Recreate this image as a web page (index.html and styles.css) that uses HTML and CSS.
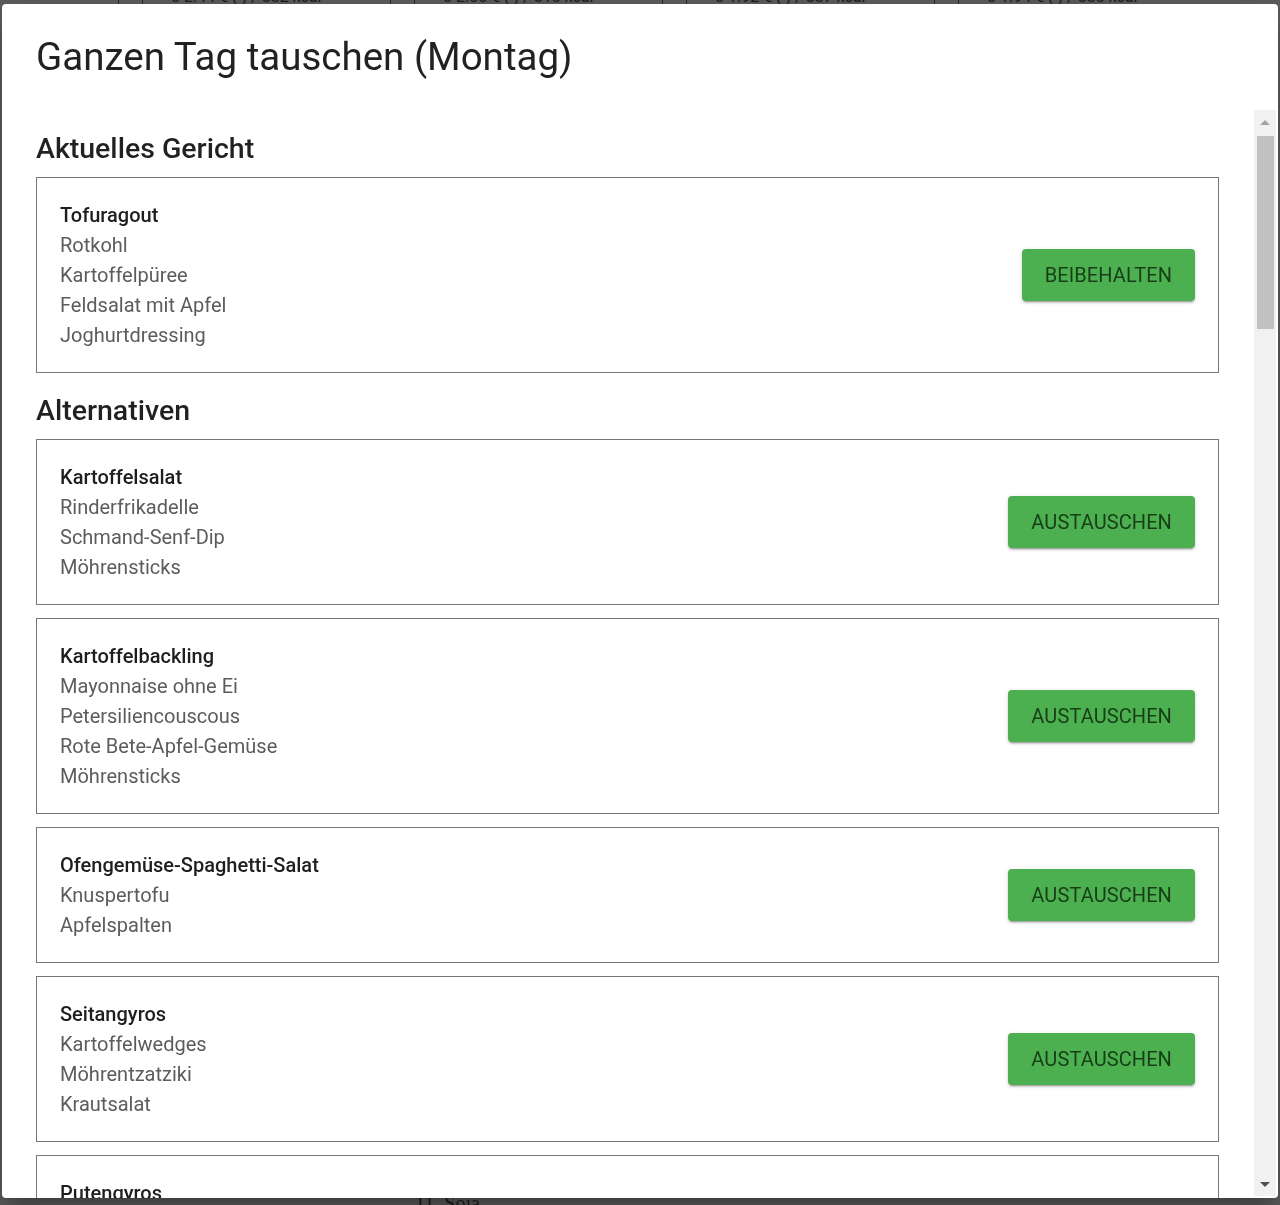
FILE: index.html
```html
<!DOCTYPE html>
<html lang="de">
<head>
<meta charset="utf-8">
<title>Ganzen Tag tauschen (Montag)</title>
<link rel="stylesheet" href="styles.css">
</head>
<body>
<div class="page">
  <div class="page-row">
    <span class="cell"><span class="sep"></span><span class="sep"></span><span class="val">0 2.44 € ( ) / 882 kcal</span></span>
    <span class="cell"><span class="sep"></span><span class="sep"></span><span class="val">0 2.30 € ( ) / 818 kcal</span></span>
    <span class="cell"><span class="sep"></span><span class="sep"></span><span class="val">0 1.92 € ( ) / 887 kcal</span></span>
    <span class="cell"><span class="sep"></span><span class="sep"></span><span class="val">0 1.94 € ( ) / 888 kcal</span></span>
  </div>
  <div class="page-spacer"></div>
  <div class="page-foot">11. Soja</div>
</div>

<div class="dialog" role="dialog" aria-labelledby="dlg-title">
  <h1 class="dialog-title" id="dlg-title">Ganzen Tag tauschen (Montag)</h1>
  <div class="dialog-content">
    <h2 class="section-title">Aktuelles Gericht</h2>
    <div class="meal-card">
      <ul class="meal-items">
        <li class="meal-main">Tofuragout</li>
        <li>Rotkohl</li>
        <li>Kartoffelpüree</li>
        <li>Feldsalat mit Apfel</li>
        <li>Joghurtdressing</li>
      </ul>
      <button class="btn">Beibehalten</button>
    </div>

    <h2 class="section-title section-title--alt">Alternativen</h2>
    <div class="meal-list">
      <div class="meal-card">
        <ul class="meal-items">
          <li class="meal-main">Kartoffelsalat</li>
          <li>Rinderfrikadelle</li>
          <li>Schmand-Senf-Dip</li>
          <li>Möhrensticks</li>
        </ul>
        <button class="btn">Austauschen</button>
      </div>
      <div class="meal-card">
        <ul class="meal-items">
          <li class="meal-main">Kartoffelbackling</li>
          <li>Mayonnaise ohne Ei</li>
          <li>Petersiliencouscous</li>
          <li>Rote Bete-Apfel-Gemüse</li>
          <li>Möhrensticks</li>
        </ul>
        <button class="btn">Austauschen</button>
      </div>
      <div class="meal-card">
        <ul class="meal-items">
          <li class="meal-main">Ofengemüse-Spaghetti-Salat</li>
          <li>Knuspertofu</li>
          <li>Apfelspalten</li>
        </ul>
        <button class="btn">Austauschen</button>
      </div>
      <div class="meal-card">
        <ul class="meal-items">
          <li class="meal-main">Seitangyros</li>
          <li>Kartoffelwedges</li>
          <li>Möhrentzatziki</li>
          <li>Krautsalat</li>
        </ul>
        <button class="btn">Austauschen</button>
      </div>
      <div class="meal-card">
        <ul class="meal-items">
          <li class="meal-main">Putengyros</li>
        </ul>
      </div>
    </div>
  </div>
  <div class="scrollbar" aria-hidden="true">
    <span class="sb-btn"><span class="sb-arrow sb-arrow--up"></span></span>
    <span class="sb-track"><span class="sb-thumb"></span></span>
    <span class="sb-btn"><span class="sb-arrow sb-arrow--down"></span></span>
  </div>
</div>
</body>
</html>
```

FILE: styles.css
```css
* { box-sizing: border-box; }

html, body {
  margin: 0;
  height: 100%;
  overflow: hidden;
}

body {
  background: #5e5e5e;
  font-family: Roboto, "Noto Sans", "Liberation Sans", sans-serif;
}

/* background page behind the modal backdrop */
.page {
  color: #1c1c1c;
  font-size: 16px;
}

.page-row {
  display: flex;
  margin-top: -13px;
  padding-left: 118px;
  height: 20px;
  line-height: 20px;
  white-space: nowrap;
}

.cell {
  display: flex;
  flex: 0 0 272px;
}

.sep {
  width: 24px;
  border-left: 1px solid #2a2a2a;
}

.val {
  padding-left: 5px;
}

.page-spacer { height: 1186px; }

.page-foot {
  padding-left: 415px;
  font-size: 20px;
  line-height: 20px;
  font-family: "Liberation Serif", serif;
}

/* modal dialog */
.dialog {
  position: fixed;
  left: 2px;
  top: 4px;
  width: 1276px;
  height: 1194px;
  background: #fff;
  border-radius: 4px;
  box-shadow: 0 11px 15px -7px rgba(0,0,0,.2), 0 24px 38px 3px rgba(0,0,0,.14), 0 9px 46px 8px rgba(0,0,0,.12);
  display: flex;
  flex-direction: column;
  overflow: hidden;
}

.dialog-title {
  margin: 0;
  padding: 32px 0 32px 34px;
  font-size: 38.5px;
  line-height: 42px;
  font-weight: 400;
  color: rgba(0,0,0,.87);
  flex: 0 0 auto;
}

.dialog-content {
  flex: 1 1 auto;
  overflow: hidden;
  padding: 0 59px 0 34px;
}

/* drawn scrollbar over the content area */
.scrollbar {
  position: absolute;
  right: 2px;
  top: 106px;
  bottom: 2px;
  width: 22px;
  background: #f1f1f1;
  display: flex;
  flex-direction: column;
}

.sb-btn {
  flex: 0 0 24px;
  display: flex;
  align-items: center;
  justify-content: center;
}

.sb-arrow {
  width: 0;
  height: 0;
  border-left: 5px solid transparent;
  border-right: 5px solid transparent;
}

.sb-arrow--up { border-bottom: 5px solid #a3a3a3; }
.sb-arrow--down { border-top: 5px solid #505050; }

.sb-track {
  flex: 1 1 auto;
  padding: 2px 2px 0 3px;
}

.sb-thumb {
  display: block;
  height: 193px;
  background: #c1c1c1;
}

.section-title {
  margin: 23px 0 12px;
  font-size: 28.5px;
  line-height: 32px;
  font-weight: 500;
  color: rgba(0,0,0,.87);
}

.section-title--alt {
  margin-top: 22px;
}

.meal-list {
  display: flex;
  flex-direction: column;
  gap: 13px;
}

.meal-card {
  display: flex;
  align-items: center;
  justify-content: space-between;
  border: 1px solid #777;
  padding: 22px 23px;
}

.meal-items {
  list-style: none;
  margin: 0;
  padding: 0;
  font-size: 20px;
  line-height: 30px;
  color: #5c5c5c;
}

.meal-main {
  font-weight: 500;
  color: #1e1e1e;
}

.btn {
  height: 52px;
  padding: 0 23px;
  border: none;
  border-radius: 4px;
  background: #4caf50;
  color: #173f17;
  font-family: Roboto, "Noto Sans", "Liberation Sans", sans-serif;
  font-size: 20px;
  font-weight: 400;
  text-transform: uppercase;
  letter-spacing: 0.1px;
  box-shadow: 0 3px 1px -2px rgba(0,0,0,.2), 0 2px 2px 0 rgba(0,0,0,.14), 0 1px 5px 0 rgba(0,0,0,.12);
  cursor: pointer;
}
```
